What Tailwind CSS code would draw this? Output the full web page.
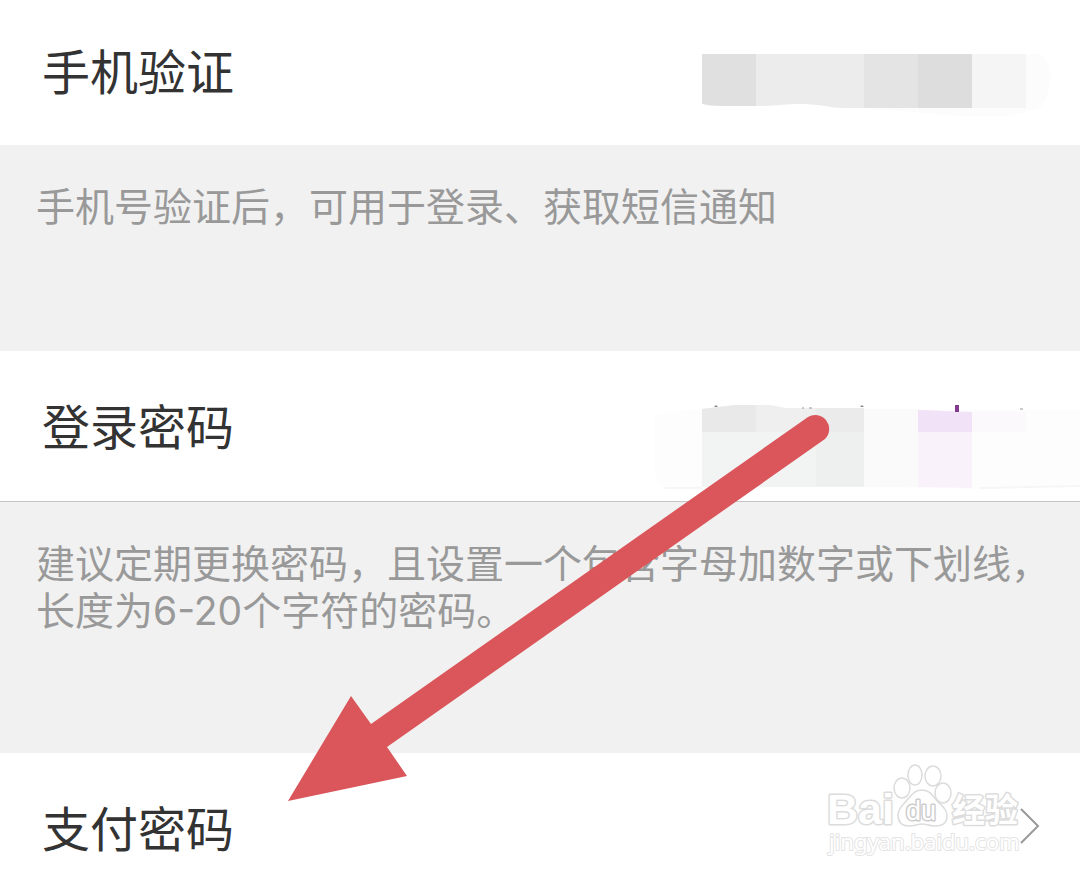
<!DOCTYPE html>
<html lang="zh-CN">
<head>
    <meta charset="UTF-8">
    <meta name="viewport" content="width=device-width, initial-scale=1.0">
    <title>账户安全</title>
    <script src="https://cdn.jsdelivr.net/npm/@tailwindcss/browser@4"></script>
</head>
<body class="bg-white font-['Inter','Noto_Sans_CJK_SC',sans-serif]">
    <main class="relative flex flex-col min-h-screen overflow-hidden">
        <!-- Phone -->
        <a href="#" class="flex items-center justify-between h-[145px] pl-[42px] text-[#333] bg-white">
            <span class="text-[48px] leading-[48px]">手机验证</span>
            <!-- Masked number -->
            <svg class="w-[378px] h-[72px] mt-[22px]" viewBox="702 48 378 72" aria-hidden="true">
                <path d="M864 54H1040Q1050 60 1050 78T1040 108L1010 116H960L864 108Z" fill="#fcfcfc"/>
                <path d="M702 54H757V106H720Q710 106 702 104Z" fill="#e0e0e0"/>
                <path d="M756 54H864V108H845C830 108 820 104 802 104S775 106 756 106Z" fill="#ececec"/>
                <path d="M864 54H918V108H864Z" fill="#e4e4e4"/>
                <path d="M918 54H972V108H918Z" fill="#dddddd"/>
                <path d="M972 54H1026V108H972Z" fill="#f5f5f5"/>
            </svg>
        </a>
        <p class="h-[206px] pt-[38px] pl-9 pr-4 bg-[#f1f1f1] text-[#999] text-[39px] leading-[47px]">手机号验证后，可用于登录、获取短信通知</p>

        <!-- Login password -->
        <a href="#" class="flex items-center justify-between h-[151px] pt-1 pl-[42px] text-[#333] bg-white border-b border-[#c4c4c4]">
            <span class="text-[48px] leading-[48px]">登录密码</span>
            <!-- Masked status -->
            <svg class="w-[430px] h-[90px] mt-10" viewBox="650 403 430 90" aria-hidden="true">
                <path d="M655 414L702 409H1080V487L980 489L860 487H665Q655 484 655 470Z" fill="#fdfdfd"/>
                <path d="M665 488H702M980 488L1080 486" stroke="#f6f6f6" stroke-width="2"/>
                <path d="M702 409L735 405H770L785 408H864V487H702Z" fill="#f2f3f3"/>
                <path d="M702 409L735 405H756V432H702Z" fill="#e9e9e9"/>
                <path d="M756 405H770L785 408H816V432H756Z" fill="#efefef"/>
                <path d="M816 408H864V432H816Z" fill="#ebebeb"/>
                <path d="M816 432H864V486H816Z" fill="#eeefef"/>
                <path d="M864 409H918V487H864Z" fill="#fafafa"/>
                <path d="M918 410L972 412V488L918 487Z" fill="#faf2fb"/>
                <path d="M918 410L972 412V432H918Z" fill="#f2e2f8"/>
                <path d="M972 412H1026V432H972Z" fill="#fcf9fd"/>
                <path d="M714 407L716 405L718 407ZM860 407L862 405L864 407Z" fill="#888"/>
                <path d="M802 408H804M809 408H812M1020 409H1023" stroke="#999" stroke-width="1"/>
                <path d="M955 405H959V412H955Z" fill="#843a91"/>
            </svg>
        </a>
        <p class="h-[251px] pt-[38px] pl-9 pr-4 bg-[#f1f1f1] text-[#999] text-[39px] leading-[47px]">建议定期更换密码，且设置一个包含字母加数字或下划线，长度为6-20个字符的密码。</p>

        <!-- Payment password -->
        <a href="#" class="relative flex items-start justify-between h-[127px] pt-[53px] pl-[42px] pr-[40px] text-[#333] bg-white">
            <span class="text-[48px] leading-[48px]">支付密码</span>
            <svg class="w-5 h-10" viewBox="0 0 20 40" fill="none" stroke="#999" stroke-width="2" aria-hidden="true">
                <path d="M1 3L18 20L1 37"/>
            </svg>
            <!-- Watermark -->
            <svg class="absolute right-[50px] top-[7px] w-[210px] h-[104px]" viewBox="820 760 210 104" fill="#fff" stroke="#dcdcdc" stroke-width="1.5" stroke-linejoin="round" aria-hidden="true">
                <text x="827" y="824" font-family="Liberation Sans" font-weight="700" font-size="43" stroke-width="3" paint-order="stroke">Bai</text>
                <ellipse cx="902" cy="788" rx="8" ry="10"/>
                <ellipse cx="915" cy="775" rx="7" ry="10"/>
                <ellipse cx="933" cy="776" rx="8" ry="10"/>
                <ellipse cx="943" cy="793" rx="8" ry="10"/>
                <path d="M922 790C930 790 933 796 937 801C942 806 947 809 947 816C947 823 942 826 935 826C929 826 926 824 922 824C917 824 915 826 909 826C901 826 898 821 898 815C898 808 903 805 907 800C911 796 914 790 922 790Z"/>
                <text x="906" y="820" font-family="Liberation Sans" font-size="27" stroke="#ccc" stroke-width="3" paint-order="stroke">du</text>
                <text x="952" y="822" font-family="Noto Sans CJK SC" font-weight="700" font-size="33" stroke-width="3" paint-order="stroke">经验</text>
                <text x="829" y="850" font-family="Noto Sans" font-size="22" stroke="#e4e4e4" stroke-width="2" paint-order="stroke">jingyan.baidu.com</text>
            </svg>
        </a>

        <!-- Arrow pointing at the payment row -->
        <svg class="absolute left-0 top-0 w-[1080px] h-[880px] pointer-events-none" viewBox="0 0 1080 880" fill="#da565b" aria-hidden="true">
            <path d="M288 801L351 696L371 724L808 417A14 14 0 0 1 825 439L387 747L407 776Z"/>
        </svg>
    </main>
</body>
</html>
